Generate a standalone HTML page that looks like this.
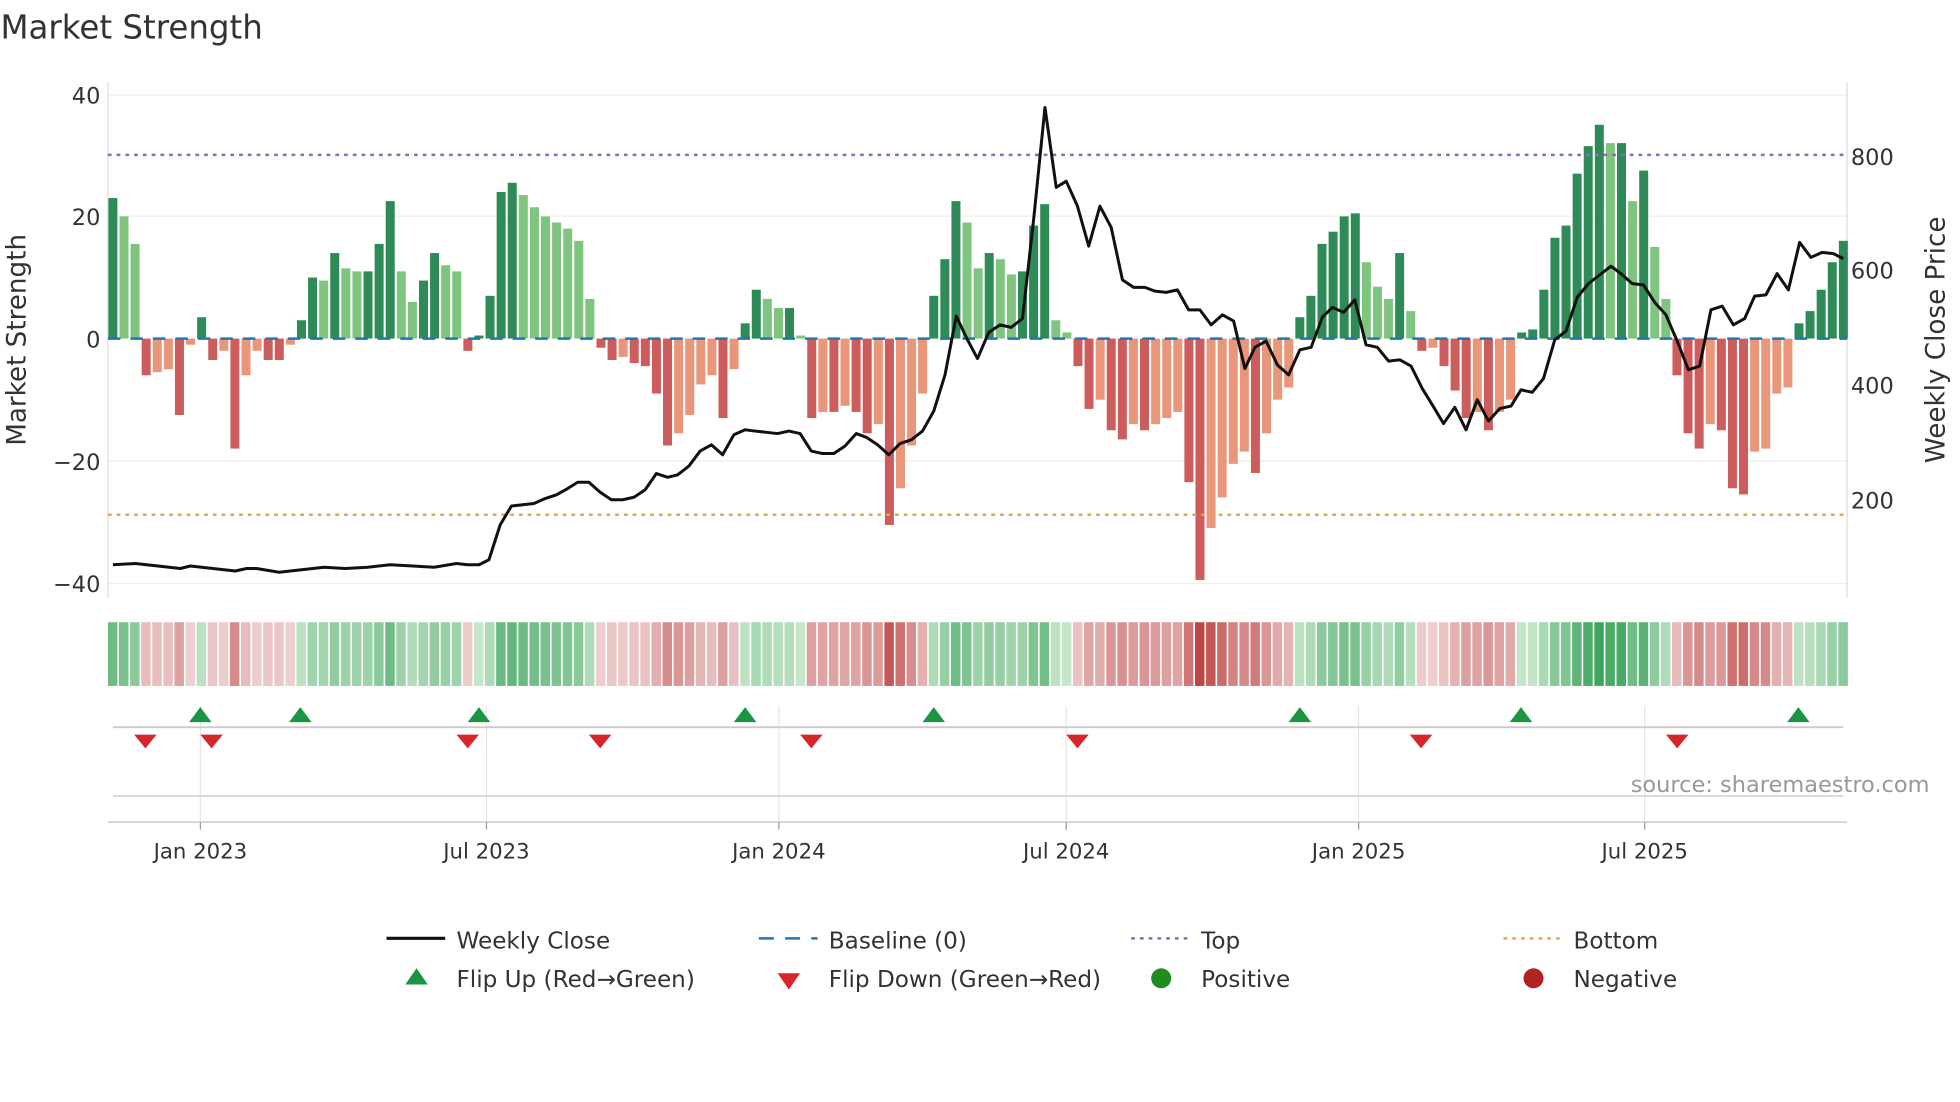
<!DOCTYPE html>
<html><head><meta charset="utf-8">
<style>
html,body{margin:0;padding:0;background:#fff;}
svg{display:block;}
text{font-family:"DejaVu Sans","Liberation Sans",sans-serif;}
</style></head>
<body>
<svg id="c" width="1960" height="1102" viewBox="0 0 1568 882" xmlns="http://www.w3.org/2000/svg">
<rect width="1568" height="882" fill="#fff"/>
<text x="0" y="31" font-size="26" fill="#333">Market Strength</text>
<g stroke="#eeeeee" stroke-width="1">
<line x1="86" y1="76" x2="1478" y2="76"/><line x1="86" y1="173" x2="1478" y2="173"/>
<line x1="86" y1="369" x2="1478" y2="369"/><line x1="86" y1="467" x2="1478" y2="467"/>
</g>
<line x1="86" y1="66" x2="86" y2="478" stroke="#ddd"/>
<line x1="1478" y1="66" x2="1478" y2="478" stroke="#ddd"/>
<g font-size="18" fill="#333" text-anchor="end">
<text x="80" y="83">40</text><text x="80" y="180">20</text><text x="80" y="278">0</text>
<text x="80" y="376">−20</text><text x="80" y="474">−40</text>
</g>
<g font-size="18" fill="#333">
<text x="1481" y="132">800</text><text x="1481" y="223">600</text>
<text x="1481" y="315">400</text><text x="1481" y="407">200</text>
</g>
<text transform="translate(20,272) rotate(-90)" font-size="21" fill="#333" text-anchor="middle">Market Strength</text>
<text transform="translate(1556,272) rotate(-90)" font-size="21" fill="#333" text-anchor="middle">Weekly Close Price</text>
<g id="bars"></g>
<line x1="86" y1="124" x2="1478" y2="124" stroke="#9467bd" stroke-width="2" stroke-dasharray="3,4"/>
<line x1="86" y1="412" x2="1478" y2="412" stroke="#f0a050" stroke-width="2" stroke-dasharray="3,4"/>
<line x1="86" y1="271" x2="1478" y2="271" stroke="#1f77b4" stroke-width="2" stroke-dasharray="10,8"/>
<polyline id="price" fill="none" stroke="#111" stroke-width="2.4" stroke-linejoin="round"/>
<g id="heat"></g>
<g stroke="#e6e6e6" stroke-width="1">
<line x1="160" y1="565" x2="160" y2="658"/><line x1="389" y1="565" x2="389" y2="658"/>
<line x1="623" y1="565" x2="623" y2="658"/><line x1="853" y1="565" x2="853" y2="658"/>
<line x1="1087" y1="565" x2="1087" y2="658"/><line x1="1316" y1="565" x2="1316" y2="658"/>
</g>
<line x1="90" y1="582" x2="1475" y2="582" stroke="#cccccc" stroke-width="1.5"/>
<line x1="90" y1="637" x2="1475" y2="637" stroke="#d8d8d8" stroke-width="1.5"/>
<line x1="86" y1="658" x2="1478" y2="658" stroke="#ccc" stroke-width="1.2"/>
<g id="marks"></g>
<text x="1544" y="634" font-size="18" fill="#999" text-anchor="end">source: sharemaestro.com</text>
<g stroke="#999"><line x1="160" y1="658" x2="160" y2="664"/><line x1="389" y1="658" x2="389" y2="664"/><line x1="623" y1="658" x2="623" y2="664"/><line x1="853" y1="658" x2="853" y2="664"/><line x1="1087" y1="658" x2="1087" y2="664"/><line x1="1316" y1="658" x2="1316" y2="664"/></g>
<g font-size="17" fill="#333" text-anchor="middle">
<text x="160" y="687">Jan 2023</text><text x="389" y="687">Jul 2023</text><text x="623" y="687">Jan 2024</text>
<text x="853" y="687">Jul 2024</text><text x="1087" y="687">Jan 2025</text><text x="1316" y="687">Jul 2025</text>
</g>
<g font-size="18.5" fill="#333">
<line x1="309" y1="751" x2="356" y2="751" stroke="#111" stroke-width="2.5"/>
<text x="365" y="759">Weekly Close</text>
<line x1="607" y1="751" x2="654" y2="751" stroke="#1f77b4" stroke-width="2" stroke-dasharray="12,9"/>
<text x="663" y="759">Baseline (0)</text>
<line x1="905" y1="751" x2="952" y2="751" stroke="#9467bd" stroke-width="2" stroke-dasharray="3,4"/>
<text x="961" y="759">Top</text>
<line x1="1203" y1="751" x2="1250" y2="751" stroke="#f0a050" stroke-width="2" stroke-dasharray="3,4"/>
<text x="1259" y="759">Bottom</text>
<polygon points="324,788 342,788 333,775" fill="#1a9641"/>
<text x="365" y="790">Flip Up (Red→Green)</text>
<polygon points="622,779 640,779 631,792" fill="#d7262a"/>
<text x="663" y="790">Flip Down (Green→Red)</text>
<circle cx="929" cy="783" r="8" fill="#1e8c1e"/>
<text x="961" y="790">Positive</text>
<circle cx="1227" cy="783" r="8" fill="#b22222"/>
<text x="1259" y="790">Negative</text>
</g>
</svg>
<script>
var V=[23,20,15.5,-6,-5.5,-5,-12.5,-1,3.5,-3.5,-2,-18,-6,-2,-3.5,-3.5,-1,3,10,9.5,14,11.5,11,11,15.5,22.5,11,6,9.5,14,12,11,-2,0.5,7,24,25.5,23.5,21.5,20,19,18,16,6.5,-1.5,-3.5,-3,-4,-4.5,-9,-17.5,-15.5,-12.5,-7.5,-6,-13,-5,2.5,8,6.5,5,5,0.5,-13,-12,-12,-11,-12,-15.5,-14,-30.5,-24.5,-17.5,-9,7,13,22.5,19,11.5,14,13,10.5,11,18.5,22,3,1,-4.5,-11.5,-10,-15,-16.5,-14,-15,-14,-13,-12,-23.5,-39.5,-31,-26,-20.5,-18.5,-22,-15.5,-10,-8,3.5,7,15.5,17.5,20,20.5,12.5,8.5,6.5,14,4.5,-2,-1.5,-4.5,-8.5,-13,-12,-15,-12,-10,1,1.5,8,16.5,18.5,27,31.5,35,32,32,22.5,27.5,15,6.5,-6,-15.5,-18,-14,-15,-24.5,-25.5,-18.5,-18,-9,-8,2.5,4.5,8,12.5,16];
var n=V.length,x0=90,x1=1475,dx=(x1-x0)/(n-1),ns="http://www.w3.org/2000/svg";
function el(t,a,p){var e=document.createElementNS(ns,t);for(var k in a)e.setAttribute(k,a[k]);p.appendChild(e);}
var B=document.getElementById('bars'),H=document.getElementById('heat');
function mix(a,b,t){return 'rgb('+[0,1,2].map(function(i){return Math.round(a[i]+(b[i]-a[i])*t)}).join(',')+')';}
for(var i=0;i<n;i++){var v=V[i],p=i?V[i-1]:0,x=x0+i*dx,y0=271,h=Math.abs(v)*4.89;
 var c=v>=0?(v>=p?'#2e8b57':'#7fc47f'):(v<=p?'#cd5c5c':'#e9967a');
 el('rect',{x:x-3.6,y:v>=0?y0-h:y0,width:7.2,height:Math.max(h,1),fill:c},B);
 var t=Math.min(Math.abs(v)/35,1);
 var hc=v>=0?mix([200,232,204],[62,165,95],t):mix([240,212,212],[190,70,70],t);
 el('rect',{x:x-4,y:498,width:7.6,height:51,fill:hc},H);}
var P=[[90,452],[108,451],[126,453],[144,455],[152,453],[170,455],[188,457],[197,455],[205,455],[223,458],[241,456],[259,454],[276,455],[294,454],[312,452],[330,453],[347,454],[365,451],[374,452],[383,452],[391,448],[400,420],[409,405],[418,404],[427,403],[436,399],[445,396],[454,391],[462,386],[471,386],[480,394],[489,400],[498,400],[507,398],[516,392],[525,379],[534,382],[542,380],[551,373],[560,361],[569,356],[578,364],[587,348],[596,344],[604,345],[613,346],[622,347],[631,345],[640,347],[649,361],[658,363],[667,363],[676,357],[685,347],[693,350],[702,356],[711,364],[720,355],[729,352],[738,345],[747,329],[756,300],[765,253],[774,272],[782,287],[791,266],[800,260],[809,262],[818,255],[827,175],[836,86],[845,150],[853,145],[862,165],[871,197],[880,165],[889,182],[898,224],[907,230],[916,230],[924,233],[933,234],[942,232],[951,248],[960,248],[969,260],[978,252],[987,257],[996,295],[1004,278],[1013,273],[1022,292],[1031,300],[1040,280],[1049,278],[1058,254],[1066,246],[1075,250],[1084,240],[1093,276],[1102,278],[1111,289],[1120,288],[1129,293],[1138,311],[1146,324],[1155,339],[1164,326],[1173,344],[1182,320],[1191,337],[1200,327],[1209,325],[1217,312],[1226,314],[1235,303],[1244,272],[1253,265],[1262,238],[1271,227],[1280,220],[1289,213],[1297,219],[1306,227],[1315,228],[1324,242],[1333,252],[1342,273],[1351,296],[1360,293],[1369,248],[1378,245],[1387,260],[1396,255],[1404,237],[1413,236],[1422,219],[1431,232],[1440,194],[1449,206],[1458,202],[1467,203],[1475,207]];
document.getElementById('price').setAttribute('points',P.map(function(a){return a.join(',')}).join(' '));
var M=document.getElementById('marks');
[160,240,383,596,747,1040,1217,1439].forEach(function(x){el('polygon',{points:(x-9)+',578 '+(x+9)+',578 '+x+',566',fill:'#1a9641'},M);});
[116,169,374,480,649,862,1137,1342].forEach(function(x){el('polygon',{points:(x-9)+',588 '+(x+9)+',588 '+x+',599',fill:'#d7262a'},M);});
</script>
</body></html>
